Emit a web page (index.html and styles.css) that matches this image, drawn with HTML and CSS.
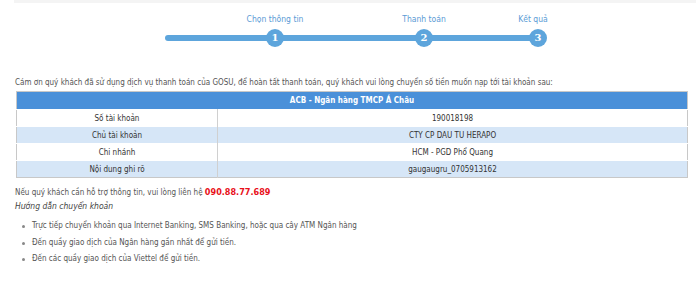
FILE: index.html
```html
<!DOCTYPE html>
<html lang="vi">
<head>
	<meta charset="UTF-8">
	<title>Kết quả thanh toán</title>
<link rel="stylesheet" href="styles.css">
</head>
<body>
<div class="page">
	<div class="topline"></div>
	<div class="steps">
		<div class="step s1"><span class="label">Chọn thông tin</span><span class="num">1</span></div>
		<div class="step s2"><span class="label">Thanh toán</span><span class="num">2</span></div>
		<div class="step s3"><span class="label">Kết quả</span><span class="num">3</span></div>
	</div>
	<p class="intro">Cám ơn quý khách đã sử dụng dịch vụ thanh toán của GOSU, để hoàn tất thanh toán, quý khách vui lòng chuyển số tiền muốn nạp tới tài khoản sau:</p>
	<table class="bank">
		<tr><th colspan="2">ACB - Ngân hàng TMCP Á Châu</th></tr>
		<tr><td class="k">Số tài khoản</td><td>190018198</td></tr>
		<tr class="alt"><td class="k">Chủ tài khoản</td><td>CTY CP DAU TU HERAPO</td></tr>
		<tr><td class="k">Chi nhánh</td><td>HCM - PGD Phổ Quang</td></tr>
		<tr class="alt"><td class="k">Nội dung ghi rõ</td><td>gaugaugru_0705913162</td></tr>
	</table>
	<p class="help">Nếu quý khách cần hỗ trợ thông tin, vui lòng liên hệ <b class="phone">090.88.77.689</b></p>
	<p class="guide">Hướng dẫn chuyển khoản</p>
	<ul class="ways">
		<li>Trực tiếp chuyển khoản qua Internet Banking, SMS Banking, hoặc qua cây ATM Ngân hàng</li>
		<li>Đến quầy giao dịch của Ngân hàng gần nhất để gửi tiền.</li>
		<li>Đến các quầy giao dịch của Viettel để gửi tiền.</li>
	</ul>
</div>
</body>
</html>
```

FILE: styles.css
```css
*{padding: 0;margin: 0;}
body{background: #fff;font-family: "DejaVu Sans Condensed","DejaVu Sans",sans-serif;font-size: 8px;color: #555;}
.page{width: 696px;height: 287px;overflow: hidden;}
.topline{height: 3px;margin-left: 14px;background: #f4f4f4;}
.steps{position: relative;width: 382px;margin: 10px 0 0 165px;height: 38px;display: flex;}
.steps:before{content: "";position: absolute;left: 0;right: 2px;top: 22px;height: 6px;border-radius: 3px;background: #5da5dc;}
.step{position: relative;flex-shrink: 0;width: 80px;display: flex;flex-direction: column;align-items: center;}
.s1{margin-left: 70px;}
.s2{margin-left: 69px;}
.s3{margin-left: 34px;}
.label{height: 16px;line-height: 12px;color: #5b9bd5;font-size: 8.5px;}
.s3 .label{margin-left: -10px;}
.num{width: 18px;height: 18px;border-radius: 50%;background: #5da5dc;color: #fff;font-weight: bold;font-size: 10px;line-height: 18px;text-align: center;font-family: "DejaVu Serif",serif;}
.intro{margin: 26px 0 0 15px;line-height: 12px;}
.bank{margin: 2px 0 0 16px;width: 672px;border-collapse: collapse;border: 1px solid #c8c8c8;color: #333;}
.bank th{background: #4a90d9;color: #fff;font-weight: bold;height: 17px;text-align: center;}
.bank td{height: 16px;text-align: center;border-top: 1px solid #fff;}
.bank td.k{width: 200px;border-right: 1px solid #d0d0d0;}
.bank tr.alt td{background: #d6e6f7;}
.help{margin: 8px 0 0 15px;line-height: 12px;}
.phone{color: #e8101a;font-size: 9px;}
.guide{margin: 1px 0 0 15px;line-height: 12px;font-style: italic;font-size: 8.5px;color: #444;}
.ways{margin: 6px 0 0 32px;list-style: none;}
.ways li{position: relative;line-height: 16.5px;}
.ways li:before{content: "";position: absolute;left: -10px;top: 7px;width: 3px;height: 3px;border-radius: 50%;background: #888;}
```
